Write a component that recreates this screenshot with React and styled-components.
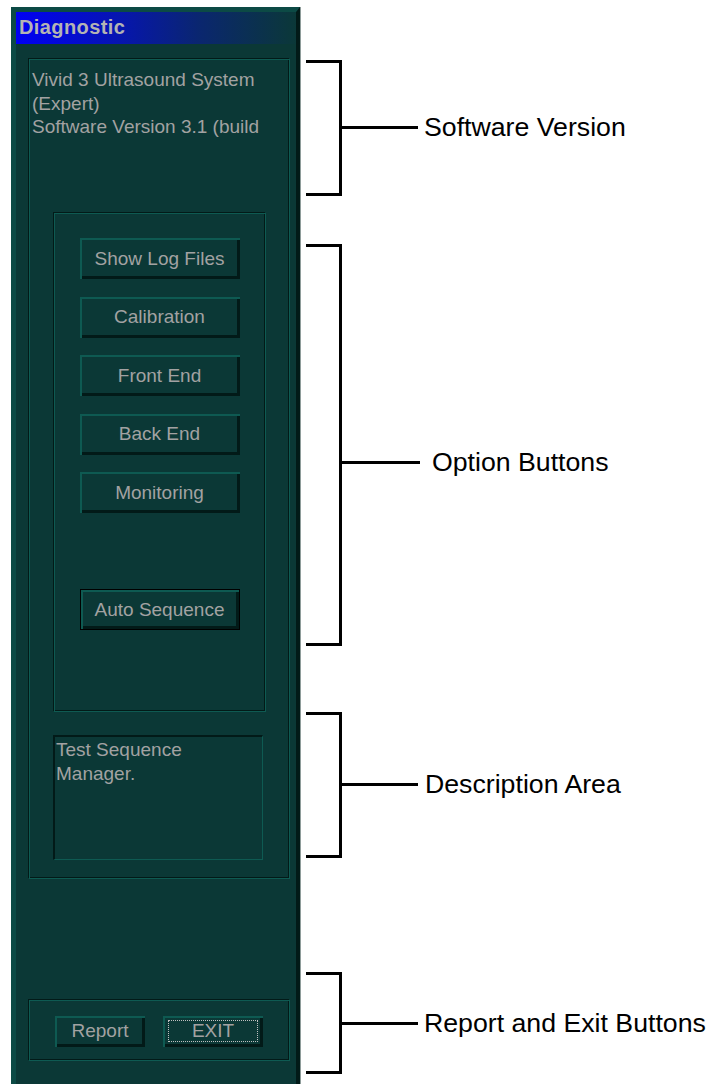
import React from 'react';
import styled, { createGlobalStyle, css } from 'styled-components';

const GlobalStyle = createGlobalStyle`
	html, body {
		margin: 0;
		padding: 0;
		background: #ffffff;
	}
	* {
		box-sizing: border-box;
	}
`;

const TEAL_BG = '#0b3836';
const TEAL_LIGHT = '#0e5a52';
const TEAL_DARK = '#021a18';
const UI_TEXT = '#a2a2a2';

const etched = css`
	border: 1px solid;
	border-color: ${TEAL_DARK} ${TEAL_LIGHT} ${TEAL_LIGHT} ${TEAL_DARK};
	box-shadow: inset 1px 1px 0 ${TEAL_LIGHT}, inset -1px -1px 0 ${TEAL_DARK};
`;

const callouts = [
	{ label: 'Software Version', top: 60, height: 136, mid: 67, lead: 76, gap: 6 },
	{ label: 'Option Buttons', top: 48, height: 402, mid: 218, lead: 78, gap: 12 },
	{ label: 'Description Area', top: 66, height: 146, mid: 72, lead: 76, gap: 7 },
	{ label: 'Report and Exit Buttons', top: 114, height: 102, mid: 51, lead: 76, gap: 6 }
];

const options = ['Show Log Files', 'Calibration', 'Front End', 'Back End', 'Monitoring'];

const App = () => {
	return (
		<>
			<GlobalStyle />
			<Page>
				<Window>
					<TitleBar>
						<Title>Diagnostic</Title>
					</TitleBar>
					<Body>
						<MainGroup>
							<VersionText>
								Vivid 3 Ultrasound System
								<br />
								(Expert)
								<br />
								Software Version 3.1 (build
							</VersionText>
							<OptionsBox>
								{options.map((name) => (
									<OptionButton key={name}>{name}</OptionButton>
								))}
								<OptionButton $default $spaced>
									Auto Sequence
								</OptionButton>
							</OptionsBox>
							<DescriptionBox>
								Test Sequence
								<br />
								Manager.
							</DescriptionBox>
						</MainGroup>
						<FooterGroup>
							<FooterButton $w={90}>Report</FooterButton>
							<FooterButton $w={100}>
								<FocusRing>EXIT</FocusRing>
							</FooterButton>
						</FooterGroup>
					</Body>
				</Window>

				<Annotations>
					{callouts.map((c) => (
						<Callout key={c.label} $top={c.top} $height={c.height}>
							<Bracket />
							<LeadRow $mid={c.mid}>
								<Lead $w={c.lead} />
								<Label $gap={c.gap}>{c.label}</Label>
							</LeadRow>
						</Callout>
					))}
				</Annotations>
			</Page>
		</>
	);
};

export default App;

const Page = styled.div`
	display: flex;
	align-items: flex-start;
	width: 714px;
	height: 1084px;
	overflow: hidden;
`;

const Window = styled.div`
	margin: 7px 0 0 11px;
	width: 289px;
	height: 1077px;
	flex-shrink: 0;
	display: flex;
	flex-direction: column;
	background: ${TEAL_BG};
	border-top: 5px solid #0c4a45;
	border-left: 5px solid #0c4a45;
	border-right: 4px solid ${TEAL_DARK};
	box-shadow: 1px 0 0 #8e9c9a;
	font-family: 'Liberation Sans', Arial, sans-serif;
`;

const TitleBar = styled.div`
	height: 32px;
	display: flex;
	align-items: center;
	padding-left: 3px;
	background: linear-gradient(to right, #0000f4 0%, #0614b4 35%, #0a2670 65%, #0b3838 100%);
`;

const Title = styled.span`
	font-size: 20px;
	font-weight: bold;
	letter-spacing: 0.4px;
	color: #b4b4b4;
	margin-top: -1px;
`;

const Body = styled.div`
	display: flex;
	flex-direction: column;
	padding: 14px 6px 0 12px;
`;

const MainGroup = styled.div`
	${etched};
	height: 821px;
	display: flex;
	flex-direction: column;
	padding-top: 9px;
`;

const VersionText = styled.div`
	padding-left: 3px;
	font-size: 19px;
	line-height: 23.5px;
	color: ${UI_TEXT};
	white-space: nowrap;
`;

const OptionsBox = styled.div`
	${etched};
	margin: 73.5px 0 0 24px;
	width: 213px;
	height: 500px;
	display: flex;
	flex-direction: column;
	align-items: center;
	gap: 17.5px;
	padding-top: 25px;
`;

const OptionButton = styled.button`
	width: 160px;
	height: 41px;
	flex-shrink: 0;
	margin: 0;
	margin-top: ${(p) => (p.$spaced ? '58.5px' : '0')};
	padding: 0;
	background: ${TEAL_BG};
	border: ${(p) => (p.$default ? '1px solid #000' : 'none')};
	box-shadow: inset 2px 2px 0 ${TEAL_LIGHT}, inset -3px -3px 0 ${TEAL_DARK};
	font-family: 'Liberation Sans', Arial, sans-serif;
	font-size: 19px;
	color: ${UI_TEXT};
	display: flex;
	align-items: center;
	justify-content: center;
`;

const DescriptionBox = styled.div`
	margin: 23px 0 0 24px;
	width: 210px;
	height: 125px;
	border-style: solid;
	border-width: 2px 1px 1px 2px;
	border-color: ${TEAL_DARK} ${TEAL_LIGHT} ${TEAL_LIGHT} ${TEAL_DARK};
	padding: 1px 0 0 1px;
	font-size: 19px;
	line-height: 23.5px;
	color: ${UI_TEXT};
`;

const FooterGroup = styled.div`
	${etched};
	margin-top: 120px;
	height: 62px;
	display: flex;
	align-items: center;
	gap: 18px;
	padding: 2px 0 0 26px;
`;

const FooterButton = styled.button`
	width: ${(p) => p.$w}px;
	height: 31px;
	margin: 0;
	padding: 0;
	background: ${TEAL_BG};
	border: none;
	box-shadow: inset 2px 2px 0 ${TEAL_LIGHT}, inset -3px -3px 0 ${TEAL_DARK};
	font-family: 'Liberation Sans', Arial, sans-serif;
	font-size: 19px;
	color: ${UI_TEXT};
	display: flex;
	align-items: center;
	justify-content: center;
`;

const FocusRing = styled.span`
	width: calc(100% - 10px);
	height: calc(100% - 9px);
	margin-top: -1px;
	border: 1px dotted #c0c0c0;
	display: flex;
	align-items: center;
	justify-content: center;
`;

const Annotations = styled.div`
	display: flex;
	flex-direction: column;
	margin-left: 6px;
	font-family: 'Liberation Sans', Arial, sans-serif;
`;

const Callout = styled.div`
	display: flex;
	align-items: flex-start;
	margin-top: ${(p) => p.$top}px;
	height: ${(p) => p.$height}px;
`;

const Bracket = styled.div`
	width: 36px;
	height: 100%;
	border: 3px solid #000;
	border-left: none;
`;

const LeadRow = styled.div`
	display: flex;
	align-items: center;
	height: 30px;
	margin-top: ${(p) => p.$mid - 15}px;
`;

const Lead = styled.div`
	width: ${(p) => p.$w}px;
	height: 3px;
	background: #000;
`;

const Label = styled.span`
	margin-left: ${(p) => p.$gap}px;
	font-size: 26.7px;
	color: #000;
	white-space: nowrap;
`;
